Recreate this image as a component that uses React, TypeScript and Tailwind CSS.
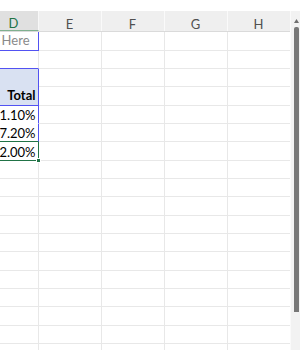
import type { ReactNode } from 'react';

type DCell = {
  text?: ReactNode;
  className: string;
  span?: boolean;
  handle?: boolean;
};

// Column D cells keyed by grid row; row 3 is covered by the merged cell above it
const dCells: Record<number, DCell> = {
  0: {
    text: <span className="text-[#8a8a8a]">Here</span>,
    className: 'border-r-[#5252f2] border-b-[#5252f2] pr-[8px] pb-[3px]',
  },
  1: { className: 'border-r-[#e6e6e6] border-b-[#5252f2]' },
  2: {
    text: <span className="font-bold text-black">Total</span>,
    className: 'bg-[#d9e1f2] border-r-[#5252f2] border-b-[#5252f2] pb-[3px]',
    span: true,
  },
  4: { text: '91.10%', className: 'border-r-[#5252f2] border-b-white' },
  5: { text: '87.20%', className: 'border-r-[#5252f2] border-b-[#217346]' },
  6: { text: '92.00%', className: 'border-r-[#217346] border-b-[#217346]', handle: true },
};

const TOTAL_ROWS = 18;

function HeaderRow() {
  return (
    <div className="flex h-[21.33px] ml-[-10.5px] bg-[#efefef] border-b border-[#dadada] text-[13px]">
      <div className="w-[49px] shrink-0 flex items-center justify-center pt-[7px] bg-[#e0e0e0] border-r border-[#f8f8f8] border-b border-b-[#7fb08f] text-[#217346]">
        D
      </div>
      {['E', 'F', 'G', 'H'].map((c) => (
        <div
          key={c}
          className="w-[63px] shrink-0 flex items-center justify-center pt-[7px] border-r border-[#fafafa] text-[#505050]"
        >
          {c}
        </div>
      ))}
    </div>
  );
}

function Grid() {
  const cells: ReactNode[] = [];
  for (let row = 0; row < TOTAL_ROWS; row++) {
    const d = dCells[row];
    if (d) {
      cells.push(
        <div
          key={`d${row}`}
          className={`relative flex items-end justify-end pr-[2px] pb-[1px] whitespace-nowrap leading-[13px] border-r border-b text-black ${d.span ? 'row-span-2' : ''} ${d.className}`}
        >
          {d.text}
          {d.handle && (
            <span className="absolute right-[-3px] bottom-[-3px] w-[5px] h-[5px] bg-[#217346] border border-white" />
          )}
        </div>,
      );
    } else if (row !== 3) {
      cells.push(<div key={`d${row}`} className="border-r border-b border-[#e8e8e8]" />);
    }
    ['E', 'F', 'G', 'H'].forEach((c) => {
      cells.push(<div key={`${c}${row}`} className="border-r border-b border-[#e8e8e8]" />);
    });
  }

  return (
    <div className="grid grid-cols-[49px_63px_63px_63px_63px] auto-rows-[18.33px] ml-[-10.5px]">
      {cells}
    </div>
  );
}

export default function App() {
  return (
    <div
      className="w-[300px] h-[350px] overflow-hidden bg-white flex flex-col text-[13px]"
      style={{ fontFamily: 'Lato, "Liberation Sans", sans-serif' }}
    >
      <div className="h-[11px] shrink-0 bg-white" />
      <div className="flex flex-1 min-h-0">
        <div className="w-[290px] shrink-0 overflow-hidden">
          <HeaderRow />
          <Grid />
        </div>
        {/* vertical scrollbar */}
        <div className="w-[10px] shrink-0 bg-[#f2f2f2] border-l border-[#fafafa] flex flex-col items-end pr-[1px]">
          <div className="h-[16px] w-[5px] flex items-end justify-center pb-[4px]">
            <svg width="5" height="4" viewBox="0 0 5 4">
              <path d="M2.5 0 L5 4 L0 4 Z" fill="#6f6f6f" />
            </svg>
          </div>
          <div className="w-[5px] h-[285px] bg-[#777] rounded-t-[2px]" />
        </div>
      </div>
    </div>
  );
}
